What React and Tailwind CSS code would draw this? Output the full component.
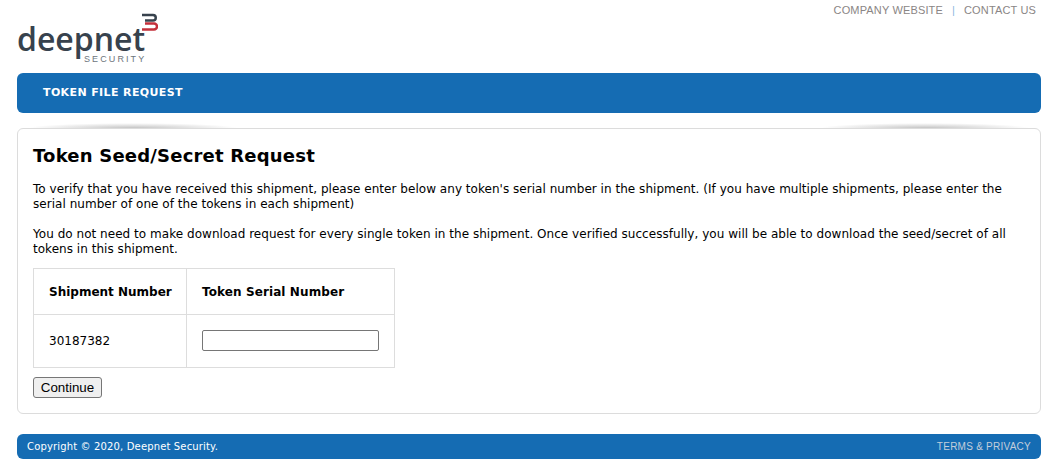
const verdana = "font-['DejaVu_Sans',Verdana,sans-serif]"

function Logo() {
  return (
    <div className="relative h-[62px] w-[145px] text-[#37424d]">
      <span className="absolute left-0 top-[24px] font-['Open_Sans',sans-serif] text-[32px] font-semibold leading-[30px]">deepnet</span>
      <span className="absolute left-[67px] top-[54px] font-['Liberation_Sans',sans-serif] text-[9px] leading-[11px] tracking-[2.1px] text-[#6d757c]">SECURITY</span>
      <svg className="absolute left-[124px] top-[13px]" width="17" height="18" viewBox="0 0 17 18" fill="none" strokeWidth="2.5">
        <path d="M1 2H12a2.75 2.75 0 0 1 0 5.5H4" stroke="#37424d" />
        <path d="M4 10.5H13a3 3 0 0 1 0 6H1" stroke="#c4303b" />
      </svg>
    </div>
  )
}

export default function App() {
  return (
    <div className={`h-[473px] overflow-hidden bg-white pl-[17px] pr-[13px] text-black ${verdana}`}>
      <header className="flex h-[73px] items-start justify-between">
        <Logo />
        <nav className="mr-[5px] mt-[3px] flex items-center font-['Liberation_Sans',sans-serif] text-[11px] leading-[15px] tracking-[0.15px] text-[#8a8585]">
          <span>COMPANY WEBSITE</span>
          <span className="mx-[9px] text-[#8fb8e0]">|</span>
          <span>CONTACT US</span>
        </nav>
      </header>

      <div className="flex h-10 items-center rounded-md bg-[#156cb3] pl-[26px] text-[11px] font-bold tracking-[0.38px] text-white">
        TOKEN FILE REQUEST
      </div>

      <main className="relative mt-[15px] h-[286px] rounded-md border border-[#dcdcdc] px-[15px] pt-[16px]">
        <div className="absolute -top-[6px] left-[10px] h-[5px] w-[210px] bg-[radial-gradient(ellipse_at_50%_100%,#c4c4c4,#ffffff_70%)]" />
        <div className="absolute -top-[6px] right-[10px] h-[5px] w-[210px] bg-[radial-gradient(ellipse_at_50%_100%,#c4c4c4,#ffffff_70%)]" />
        <h1 className="text-[18px] font-bold leading-[22px] tracking-[0.2px]">Token Seed/Secret Request</h1>
        <p className="mt-[15px] text-[12px] leading-[15px] tracking-[0.035px]">
          To verify that you have received this shipment, please enter below any token's serial number in the shipment. (If you have multiple shipments, please enter the serial number of one of the tokens in each shipment)
        </p>
        <p className="mt-[15px] text-[12px] leading-[15px] tracking-[0.035px]">
          You do not need to make download request for every single token in the shipment. Once verified successfully, you will be able to download the seed/secret of all tokens in this shipment.
        </p>
        <table className="mt-[11px] w-[362px] border-collapse text-[12px]">
          <tbody>
            <tr className="h-[46px]">
              <th className="w-[153px] border border-[#dddddd] pl-[15px] text-left font-bold">Shipment Number</th>
              <th className="border border-[#dddddd] pl-[15px] text-left font-bold tracking-[0.1px]">Token Serial Number</th>
            </tr>
            <tr className="h-[53px]">
              <td className="border border-[#dddddd] pl-[15px]">30187382</td>
              <td className="border border-[#dddddd] pl-[15px]">
                <input type="text" className="mb-[2px] block h-[21px] w-[177px] rounded-[2px] border border-[#767676] bg-white" />
              </td>
            </tr>
          </tbody>
        </table>
        <button className="mt-[9px] block h-[21px] w-[69px] rounded-[3px] border border-[#767676] bg-[#efefef] font-['Liberation_Sans',sans-serif] text-[13.33px] leading-none">
          Continue
        </button>
      </main>

      <footer className="mt-5 flex h-[25px] items-center justify-between rounded-md bg-[#156cb3] px-[10px] text-[10px]">
        <span className="tracking-[0.15px] text-white">Copyright © 2020, Deepnet Security.</span>
        <span className="font-['Liberation_Sans',sans-serif] tracking-[0.25px] text-[#c3cedb]">TERMS &amp; PRIVACY</span>
      </footer>
    </div>
  )
}
